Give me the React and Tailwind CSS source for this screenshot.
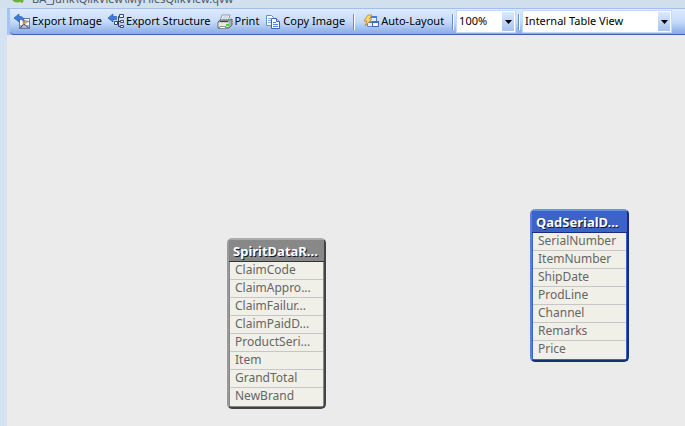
const uiFont = "font-['Noto_Sans','Open_Sans',sans-serif]";
const nodeFont = "font-['Noto_Sans',sans-serif]";

function ExportImageIcon() {
  return (
    <svg width="17" height="17" viewBox="0 0 17 17" aria-hidden="true">
      <rect x="5.500" y="5.500" width="10" height="10" fill="#fbfcff" stroke="#68789a" />
      <path d="M6 12h9v3H6z" fill="#9eb8e3" />
      <circle cx="10.500" cy="9" r="2.200" fill="#e79a51" />
      <path d="M6.500 15l3-4 2 1 3 3" stroke="#5a3f38" fill="none" />
      <path d="M13 7v3M12 8.500h3" stroke="#7c9cd6" fill="none" />
      <path d="M0 5l5-4v2.500c4 0 5 1.500 5 5C8.500 6.500 7 6.500 5 6.500V9z" fill="#3d7be0" stroke="#295eb8" strokeWidth=".7" />
    </svg>
  );
}

function ExportStructureIcon() {
  return (
    <svg width="17" height="17" viewBox="0 0 17 17" aria-hidden="true">
      <path d="M10.500 3.500v10M8 8.500h4M10.500 3.500H12M10.500 13.500H12" stroke="#313b50" fill="none" />
      <path d="M11.500 1.500h4v3h-4zM12.500 7.500h3v2h-3zM12.500 12.500h3v2h-3zM6.500 8.500h3v3h-3z" fill="#eef4ff" stroke="#3e4b63" />
      <path d="M0 5l5-4v2.500h3.500v3H5V9z" fill="#3d7be0" stroke="#295eb8" strokeWidth=".7" />
    </svg>
  );
}

function PrintIcon() {
  return (
    <svg width="17" height="16" viewBox="0 0 17 16" aria-hidden="true">
      <path d="M5 1h8l-2 6H3z" fill="#fff" stroke="#8b97a8" />
      <path d="M6 3h5M5.500 5h5" stroke="#a9b8cc" />
      <path d="M1 8l2-2h10l2-1v6l-3 3H1z" fill="#a9b0ac" stroke="#5c6866" />
      <path d="M1.500 8.500h10V13h-10z" fill="#e6e9df" />
      <path d="M3 7.500h8" stroke="#3e4745" />
      <path d="M3 12.500h6l-1 2H2z" fill="#fff" stroke="#66716f" strokeWidth=".7" />
      <rect x="9" y="10" width="3" height="2" fill="#48d52b" />
    </svg>
  );
}

function CopyIcon() {
  return (
    <svg width="17" height="16" viewBox="0 0 17 16" aria-hidden="true">
      <path d="M1.500 1.500h5l2 2v8h-7z" fill="#f7fbff" stroke="#6c8fc9" />
      <path d="M3 4.500h3M3 6.500h3M3 8.500h3" stroke="#82a6dc" />
      <path d="M6.500 4.500h5l3 3v7h-8z" fill="#f7fbff" stroke="#3b66b2" />
      <path d="M11.500 4.500v3h3" fill="#cadcf8" stroke="#3b66b2" />
      <path d="M8 8.500h3M8 10.500h5M8 12.500h5" stroke="#5685d0" />
    </svg>
  );
}

function LayoutIcon() {
  return (
    <svg width="17" height="16" viewBox="0 0 17 16" aria-hidden="true">
      <path d="M6.500 2.500h7v5h-7z" fill="#e4efff" stroke="#5d83c3" />
      <path d="M6 2h8v2H6z" fill="#4c7ccd" />
      <path d="M4.500 8.500h6v4h-6z" fill="#e4efff" stroke="#5d83c3" />
      <path d="M9.500 7.500h6v5h-6z" fill="#f4f8ff" stroke="#3a65b2" />
      <path d="M9 7h7v2H9z" fill="#3c6fc9" />
      <path d="M5 1h4L6.500 5H9l-7 7 2-5H1z" fill="#ffdc55" stroke="#b5862a" strokeWidth=".8" />
    </svg>
  );
}

function ToolButton({ icon, label }) {
  return (
    <button type="button" className="flex h-6 shrink-0 items-center gap-px whitespace-nowrap">
      {icon}
      <span>{label}</span>
    </button>
  );
}

function Separator() {
  return <div className="h-4 w-0.5 shrink-0 border-l border-[#6a8ccb] bg-white" />;
}

function Dropdown({ label, value, width }) {
  return (
    <div className={`relative h-[23px] shrink-0 border border-[#c4daf9] bg-white ${width}`}>
      <select
        aria-label={label}
        defaultValue={value}
        className="h-full w-full appearance-none bg-transparent pl-0.5 pr-3 outline-none"
      >
        <option>{value}</option>
      </select>
      <span className="pointer-events-none absolute inset-y-px right-px flex w-3 items-center justify-center bg-linear-to-b from-[#dce9fd] to-[#a5c2ee]">
        <svg width="7" height="4" viewBox="0 0 7 4" aria-hidden="true">
          <path d="M0 0h7L3.500 4z" fill="#000" />
        </svg>
      </span>
    </div>
  );
}

function TableNode({ title, fields, place, frame, header }) {
  return (
    <section className={`absolute w-[99px] rounded-[5px] border-2 ${place} ${frame} ${nodeFont}`}>
      <h2 className={`h-[22px] border-b pl-1 text-[13px] leading-[22px] font-bold whitespace-nowrap text-white [text-shadow:1px_1px_0_#111827] ${header}`}>
        {title}
      </h2>
      <ul className="mx-px mb-px bg-[#f0f0e8] text-[12px] text-[#666]">
        {fields.map((field) => (
          <li key={field} className="h-[18px] border-b border-[#c6c6c6] pl-[5px] leading-[15px] whitespace-nowrap last:border-transparent">
            {field}
          </li>
        ))}
      </ul>
    </section>
  );
}

export default function App() {
  return (
    <div className={`flex h-screen flex-col overflow-hidden bg-[#d5e3f1] text-[11px] text-black ${uiFont}`}>
      <header className="flex h-2 shrink-0 items-end gap-2 overflow-hidden bg-linear-to-r from-[#d3e1ef] to-[#d1dfec] pl-3 text-[#4b5663]">
        <svg className="shrink-0" width="12" height="14" viewBox="0 0 12 14" aria-hidden="true">
          <circle cx="5" cy="3" r="4" fill="none" stroke="#69b532" strokeWidth="3" />
          <path d="M7 5l4 3" stroke="#69b532" strokeWidth="3" />
        </svg>
        <span className="leading-[18px] whitespace-nowrap">BA_Junk\QlikView\MyFilesQlikView.qvw</span>
      </header>
      <div className="flex min-h-0 flex-1 flex-col pl-[7px]">
        <div className="flex h-[27px] shrink-0 border-t border-[#9fbff0] bg-[#a5c3f3] pl-[3px]">
          <nav
            aria-label="Table viewer"
            className="flex flex-1 items-center gap-2 rounded-bl border-b border-[#3d64ab] bg-linear-to-b from-[#dfebfe] via-[#c7dbfa] to-[#86abe5] pl-1"
          >
            <div className="flex items-center gap-1.5">
              <ToolButton icon={<ExportImageIcon />} label="Export Image" />
              <ToolButton icon={<ExportStructureIcon />} label="Export Structure" />
              <ToolButton icon={<PrintIcon />} label="Print" />
              <ToolButton icon={<CopyIcon />} label="Copy Image" />
            </div>
            <Separator />
            <ToolButton icon={<LayoutIcon />} label="Auto-Layout" />
            <div className="flex items-center gap-0.5">
              <Separator />
              <Dropdown label="Zoom" value="100%" width="w-[60px]" />
              <Separator />
              <Dropdown label="View" value="Internal Table View" width="w-[150px]" />
            </div>
          </nav>
        </div>
        <main className="relative flex-1 bg-[#ebebeb]">
          <TableNode
            title="SpiritDataR..."
            fields={["ClaimCode", "ClaimAppro...", "ClaimFailur...", "ClaimPaidD...", "ProductSeri...", "Item", "GrandTotal", "NewBrand"]}
            place="left-[220px] top-[203px]"
            frame="border-t-[#aaa] border-l-[#999] border-r-[#444] border-b-[#444] bg-[#888]"
            header="bg-[#888] border-[#333]"
          />
          <TableNode
            title="QadSerialD..."
            fields={["SerialNumber", "ItemNumber", "ShipDate", "ProdLine", "Channel", "Remarks", "Price"]}
            place="left-[523px] top-[174px]"
            frame="border-t-[#6f90e0] border-l-[#5c80d8] border-r-[#152e75] border-b-[#152e75] bg-[#3b63c8]"
            header="bg-[#3b63c8] border-[#152e75]"
          />
        </main>
      </div>
    </div>
  );
}
